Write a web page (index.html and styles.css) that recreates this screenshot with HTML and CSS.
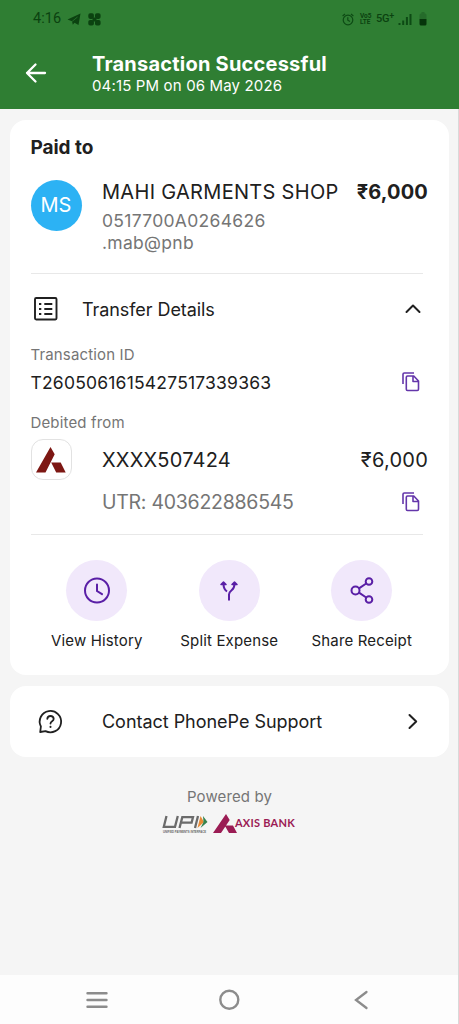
FILE: index.html
```html
<!DOCTYPE html>
<html lang="en">
<head>
<meta charset="utf-8">
<title>Transaction Successful</title>
<link rel="stylesheet" href="styles.css">
</head>
<body>
<div class="screen">
  <header class="header">
    <div class="status">
      <span class="clock">4:16</span>
      <svg class="plane" width="14" height="13" viewBox="0 0 14 13"><path d="M0.500 6.500 13.500.5 11.500 12 7.500 9.800 5.800 11.800 5 8.300Z" fill="#0b4210"/><path d="M5.200 8.300 10.500 4" stroke="#2f7e33" stroke-width=".7"/></svg>
      <svg class="clover" width="13" height="13" viewBox="0 0 13 13"><g fill="#0b4210"><rect x=".3" y=".3" width="5.600" height="5.600" rx="1.800"/><rect x="7" y=".3" width="5.600" height="5.600" rx="1.800"/><rect x=".3" y="7" width="5.600" height="5.600" rx="1.800"/><rect x="7" y="7" width="5.600" height="5.600" rx="1.800"/><path d="M4.500 4.500h4v4h-4z"/></g></svg>
      <svg class="alarm" width="12" height="13" viewBox="0 0 12 13" fill="none" stroke="#0d4a14" stroke-width="1.200"><circle cx="6" cy="7" r="4.800"/><path d="M.6 3 3 1M11.400 3 9 1M5.800 4.200V7.200L8 8.500"/></svg>
      <span class="volte"><span>Vo5</span><span>LTE</span></span>
      <span class="net">5G<sup>+</sup></span>
      <svg class="signal" width="14" height="12" viewBox="0 0 14 12" fill="#0d4a14"><path d="M.5 10h2v2h-2zM4.200 7.500h2V12h-2zM7.900 4h2v8h-2zM11.500 1h2v11h-2z"/></svg>
      <svg class="battery" width="8" height="14" viewBox="0 0 8 14"><path d="M2.500 0h3v1.500h-3zM.5 3q0-1.500 1.500-1.500h4Q7.500 1.500 7.500 3v4h-7z" fill="#256b2a"/><path d="M.5 7h7v5q0 1.500-1.500 1.500H2Q.5 13.500.5 12z" fill="#06350b"/></svg>
    </div>
    <div class="titlebar">
      <svg class="back" width="22" height="22" viewBox="0 0 22 22" fill="none" stroke="#fff" stroke-width="2.300" stroke-linecap="round" stroke-linejoin="round"><path d="M20 11H2M10.500 2.500 2 11l8.500 8.500"/></svg>
      <div class="titles">
        <h1 class="title">Transaction Successful</h1>
        <p class="date">04:15 PM on 06 May 2026</p>
      </div>
    </div>
  </header>

  <main class="content">
    <section class="card receipt">
      <h2 class="paid">Paid to</h2>
      <div class="payee">
        <div class="avatar">MS</div>
        <div class="payee-info">
          <div class="name">MAHI GARMENTS SHOP</div>
          <div class="vpa">0517700A0264626<br>.mab@pnb</div>
        </div>
        <div class="amount bold">₹6,000</div>
      </div>
      <div class="divider"></div>
      <div class="details-head">
        <svg width="24" height="24" viewBox="0 0 24 24" fill="none" stroke="#202020" stroke-width="1.900"><rect x="1" y="1" width="21.500" height="21.500" rx="1.200"/><path d="M5 7h2.300M5 12h2.300M5 17h2.300M10.300 7h8M10.300 12h8M10.300 17h8"/></svg>
        <span class="details-label">Transfer Details</span>
        <svg class="up" width="16" height="10" viewBox="0 0 16 10" fill="none" stroke="#202020" stroke-width="2" stroke-linecap="round" stroke-linejoin="round"><path d="M1.500 8 8 1.500 14.500 8"/></svg>
      </div>
      <div class="caption">Transaction ID</div>
      <div class="txn">
        <span class="txn-id">T2605061615427517339363</span>
        <svg class="copy" width="18" height="20" viewBox="0 0 18 20" fill="none" stroke="#6436aa" stroke-width="1.600" stroke-linejoin="round"><path d="M1 12V2.300Q1 1 2.300 1H12"/><path d="M5.500 4h6.300l4.700 5v8.300q0 1.200-1.200 1.200H5.500q-1.200 0-1.200-1.200V5.200Q4.300 4 5.500 4zM11 4.300V9.500h5.500"/></svg>
      </div>
      <div class="caption debit-label">Debited from</div>
      <div class="bank">
        <div class="bank-logo"><svg width="30" height="26" viewBox="0 0 30 26" fill="#7d1713"><path d="M14.500 0 18.700 7.300 9.500 25.500H0zM15.200 15.500h9.500l5 10h-9.500z"/></svg></div>
        <span class="acct">XXXX507424</span>
        <span class="amount plain">₹6,000</span>
      </div>
      <div class="utr-row">
        <span class="utr">UTR: 403622886545</span>
        <svg class="copy" width="18" height="20" viewBox="0 0 18 20" fill="none" stroke="#6436aa" stroke-width="1.600" stroke-linejoin="round"><path d="M1 12V2.300Q1 1 2.300 1H12"/><path d="M5.500 4h6.300l4.700 5v8.300q0 1.200-1.200 1.200H5.500q-1.200 0-1.200-1.200V5.200Q4.300 4 5.500 4zM11 4.300V9.500h5.500"/></svg>
      </div>
      <div class="divider second"></div>
      <div class="actions">
        <div class="action">
          <div class="bubble"><svg width="28" height="28" viewBox="0 0 28 28" fill="none" stroke="#5a1fa6" stroke-width="2" stroke-linecap="round"><circle cx="14" cy="13.500" r="12"/><path d="M14 7.500V14l5 3.200"/></svg></div>
          <span>View History</span>
        </div>
        <div class="action">
          <div class="bubble"><svg width="20" height="22" viewBox="0 0 20 22" fill="none" stroke="#5a1fa6" stroke-width="2"><path d="M10 20.500v-6q0-2 2.600-4.200Q15.500 8 15.500 4M4.500 4Q4.500 9 8 11.500"/><path d="M2 4.500 4.500 2 7 4.500zM13 4.500 15.500 2 18 4.500z" fill="#5a1fa6" stroke-width="1.500" stroke-linejoin="round"/></svg></div>
          <span>Split Expense</span>
        </div>
        <div class="action">
          <div class="bubble"><svg width="24" height="28" viewBox="0 0 24 28" fill="none" stroke="#5a1fa6" stroke-width="2"><circle cx="5.500" cy="13.500" r="4"/><circle cx="19" cy="4.500" r="3.300"/><circle cx="19" cy="22.500" r="3.300"/><path d="m9 11.300 7.200-4.800M9 15.700l7.200 4.800"/></svg></div>
          <span>Share Receipt</span>
        </div>
      </div>
    </section>

    <section class="card support">
      <svg width="25" height="25" viewBox="0 0 25 25" fill="none" stroke="#202020" stroke-width="1.800" stroke-linecap="round" stroke-linejoin="round"><path d="M2.200 23 2.900 17.500A10.700 10.700 0 1 1 7.500 22.100Z"/><path d="M9.300 9.800Q9.600 7 12.500 7T15.700 9.800Q15.700 11.200 14.100 12.300T12.500 14.500"/><path d="M12.500 17.700v.2" stroke-width="2"/></svg>
      <span class="support-label">Contact PhonePe Support</span>
      <svg class="next" width="10" height="17" viewBox="0 0 10 17" fill="none" stroke="#202020" stroke-width="2" stroke-linecap="round" stroke-linejoin="round"><path d="m1.500 2 6.700 6.500L1.500 15"/></svg>
    </section>

    <footer class="powered">
      <span class="powered-label">Powered by</span>
      <div class="logos">
        <svg class="upi" width="48" height="24" viewBox="0 0 48 24"><g fill="none" stroke="#6b6b6b" stroke-width="2.300"><path d="M4.500 2 1.800 12.800H13l2.800-10.800M17.500 14l2.800-10.800H31l-1.400 5.400H19.500M33 14 36 2"/></g><path d="M38.500 2l3.500 6-6.500 6z" fill="#e78a36"/><path d="M41 2l4.500 6-7 6 3-6z" fill="#35834e"/><text x="1" y="18.500" textLength="43" lengthAdjust="spacingAndGlyphs" class="tagline">UNIFIED PAYMENTS INTERFACE</text></svg>
        <svg class="axis" width="24" height="19" viewBox="0 0 24 19" fill="#9b1c54"><path d="M13 0 16.700 6 8 19H0zM11.700 11.500h8.300l4 7.500h-8z"/></svg>
        <span class="axis-name">AXIS BANK</span>
      </div>
    </footer>
  </main>

  <nav class="nav">
    <svg width="22" height="18" viewBox="0 0 22 18" stroke="#8c8c8c" stroke-width="2.400" stroke-linecap="round"><path d="M1.500 2.300h19M1.500 9h19M1.500 15.700h19"/></svg>
    <svg width="22" height="22" viewBox="0 0 22 22" fill="none" stroke="#8c8c8c" stroke-width="2.400"><circle cx="11.300" cy="10.700" r="9"/></svg>
    <svg width="14" height="20" viewBox="0 0 14 20" fill="none" stroke="#8c8c8c" stroke-width="2.300" stroke-linecap="round"><path d="M12.500 2 2 10l10.500 8"/></svg>
  </nav>
</div>
</body>
</html>
```
FILE: styles.css
```css
* { box-sizing: border-box; }
body { margin: 0; background: #f5f5f5; font-family: Inter, Roboto, "Noto Sans", sans-serif; color: #202020; }
h1, h2, p { margin: 0; }
svg { display: block; flex: none; overflow: visible; }
.screen { width: 459px; height: 1024px; display: flex; flex-direction: column; overflow: hidden; white-space: nowrap; }

.header { height: 109px; flex: none; background: #2f7e33; }
.status { height: 38px; padding: 0 32px 0 33px; display: flex; align-items: center; color: #0b4210; }
.clock { font: 14.500px/18px Roboto, sans-serif; width: 34px; height: 18px; letter-spacing: 0.1px; }
.plane { margin-right: 7px; }
.alarm { margin-left: auto; margin-right: 6px; }
.volte { display: flex; flex-direction: column; font: bold 6.500px/6px Roboto, sans-serif; width: 16px; }
.net { font: 500 11px/14px Roboto, sans-serif; width: 22px; display: flex; letter-spacing: -0.3px; }
.net sup { font-size: 9px; line-height: 9px; vertical-align: top; }
.signal { margin-right: 7px; }
.titlebar { display: flex; padding: 14px 0 0 25px; color: #fff; }
.back { margin-top: 10px; }
.titles { padding-left: 45px; }
.title { font-size: 20px; line-height: 24px; font-weight: 700; letter-spacing: 0.22px; }
.date { font-size: 15px; line-height: 20px; letter-spacing: 0.15px; }

.content { flex: 1; padding: 11px 9px 0 10px; border-right: 1px solid #d9d9d9; }
.card { background: #fff; border-radius: 16px; }
.receipt { padding: 15px 21px 25px 20.500px; height: 555px; }
.paid { font-size: 19px; line-height: 26px; font-weight: 700; letter-spacing: -0.05px; }
.payee { display: flex; height: 93px; margin-top: 19px; }
.avatar { width: 51px; height: 51px; flex: none; border-radius: 50%; background: #2cb2f4; color: #fff; font-size: 20px; line-height: 51px; text-align: center; }
.payee-info { margin-left: 20.500px; padding-top: 1px; }
.name { font-size: 20px; line-height: 23px; letter-spacing: 0.3px; }
.vpa { margin-top: 5.500px; font-size: 17.500px; line-height: 22px; color: #757575; letter-spacing: 0.3px; }
.amount { margin-left: auto; font-size: 20px; line-height: 23px; }
.bold { font-weight: 700; padding-top: 1px; letter-spacing: 0.15px; }
.plain { letter-spacing: 0.25px; padding-top: 1px; }
.divider { height: 1px; background: #e8e8e8; margin-right: 5px; }
.details-head { height: 72px; display: flex; align-items: center; padding: 0 7px 2px 3px; }
.details-label { margin-left: 24.500px; font-size: 18px; letter-spacing: -0.07px; }
.up { margin-left: auto; }
.caption { font-size: 15px; line-height: 17px; color: #757575; letter-spacing: 0.15px; }
.txn { height: 38px; display: flex; align-items: center; justify-content: space-between; }
.txn-id { font-size: 17.500px; letter-spacing: 0.2px; }
.copy { margin-right: 8.500px; }
.debit-label { margin-top: 13px; }
.bank { margin-top: 8px; height: 41px; display: flex; align-items: center; }
.bank-logo { width: 41px; height: 41px; border: 1px solid #e2e2e2; border-radius: 12px; display: flex; align-items: center; justify-content: center; }
.acct { margin-left: 30.500px; font-size: 20px; letter-spacing: 0.2px; }
.utr-row { height: 43px; padding-left: 71.500px; display: flex; align-items: center; justify-content: space-between; }
.utr { font-size: 19.500px; color: #757575; letter-spacing: -0.26px; padding-top: 1px; }
.second { margin-top: 11px; }
.actions { display: grid; grid-template-columns: repeat(3, 1fr); margin-top: 25px; }
.action { display: flex; flex-direction: column; align-items: center; font-size: 15px; line-height: 19px; gap: 10px; letter-spacing: 0.15px; }
.bubble { width: 61px; height: 61px; border-radius: 50%; background: #f1e8fb; display: flex; align-items: center; justify-content: center; }
.support { margin-top: 10.500px; height: 71.500px; padding: 0 31px 0 28px; display: flex; align-items: center; }
.support-label { margin-left: 39px; padding-top: 1px; font-size: 18px; letter-spacing: -0.03px; }
.next { margin-left: auto; }
.powered { margin-top: 30px; display: flex; flex-direction: column; align-items: center; color: #757575; }
.powered-label { font-size: 15px; line-height: 20px; letter-spacing: 0.12px; }
.logos { display: flex; margin: 7px 2px 0 0; height: 24px; align-items: flex-start; }
.tagline { font: bold 3px "Liberation Sans", sans-serif; fill: #666; }
.axis { margin-left: 3px; }
.axis-name { font: bold 11px/18px Lato, sans-serif; color: #9b1c54; letter-spacing: 0.25px; margin-left: -2px; }

.nav { height: 49px; flex: none; background: #fdfdfd; display: grid; grid-template-columns: repeat(3, 1fr); align-items: center; justify-items: center; padding: 0 31px; border-right: 1px solid #d9d9d9; }
```
